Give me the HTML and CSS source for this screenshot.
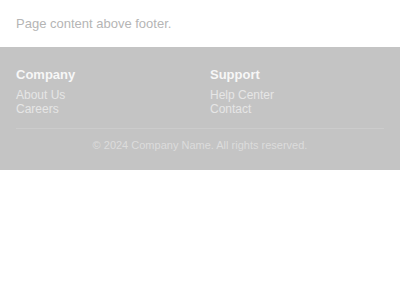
FILE: index.html
```html
<!DOCTYPE html>
<html lang="en">
<head>
    <meta charset="UTF-8">
    <meta name="viewport" content="width=device-width, initial-scale=1.0">
    <title>Footer</title>
    <link rel="stylesheet" href="styles.css">
</head>
<body>

    <main class="page">
        <p>Page content above footer.</p>
    </main>

    <!-- footer -->
    <footer class="footer">
        <div class="footer-cols">
            <div class="footer-col">
                <h4>Company</h4>
                <a href="#">About Us</a>
                <a href="#">Careers</a>
            </div>
            <div class="footer-col">
                <h4>Support</h4>
                <a href="#">Help Center</a>
                <a href="#">Contact</a>
            </div>
        </div>
        <div class="footer-bottom">© 2024 Company Name. All rights reserved.</div>
    </footer>

</body>
</html>
```

FILE: styles.css
```css
body { margin: 0; font-family: "Liberation Sans", Arial, sans-serif; background: #ffffff; }
.page { padding: 16px; }
.page p { margin: 0; font-size: 13px; line-height: 15px; color: #b5b5b5; }

/* footer */
.footer { background: #c4c4c4; padding: 20px 16px 18px; }
.footer-cols { display: grid; grid-template-columns: 1fr 1fr; gap: 20px; }
.footer-col h4 { margin: 0 0 6px; font-size: 13px; line-height: 15px; color: #f7f7f7; font-weight: bold; }
.footer-col a { display: block; font-size: 12px; line-height: 14px; color: #e6e6e6; text-decoration: none; }
.footer-bottom { margin-top: 12px; border-top: 1px solid #cccccc; padding-top: 9px; text-align: center; font-size: 11px; line-height: 14px; color: #dcdcdc; }
```
